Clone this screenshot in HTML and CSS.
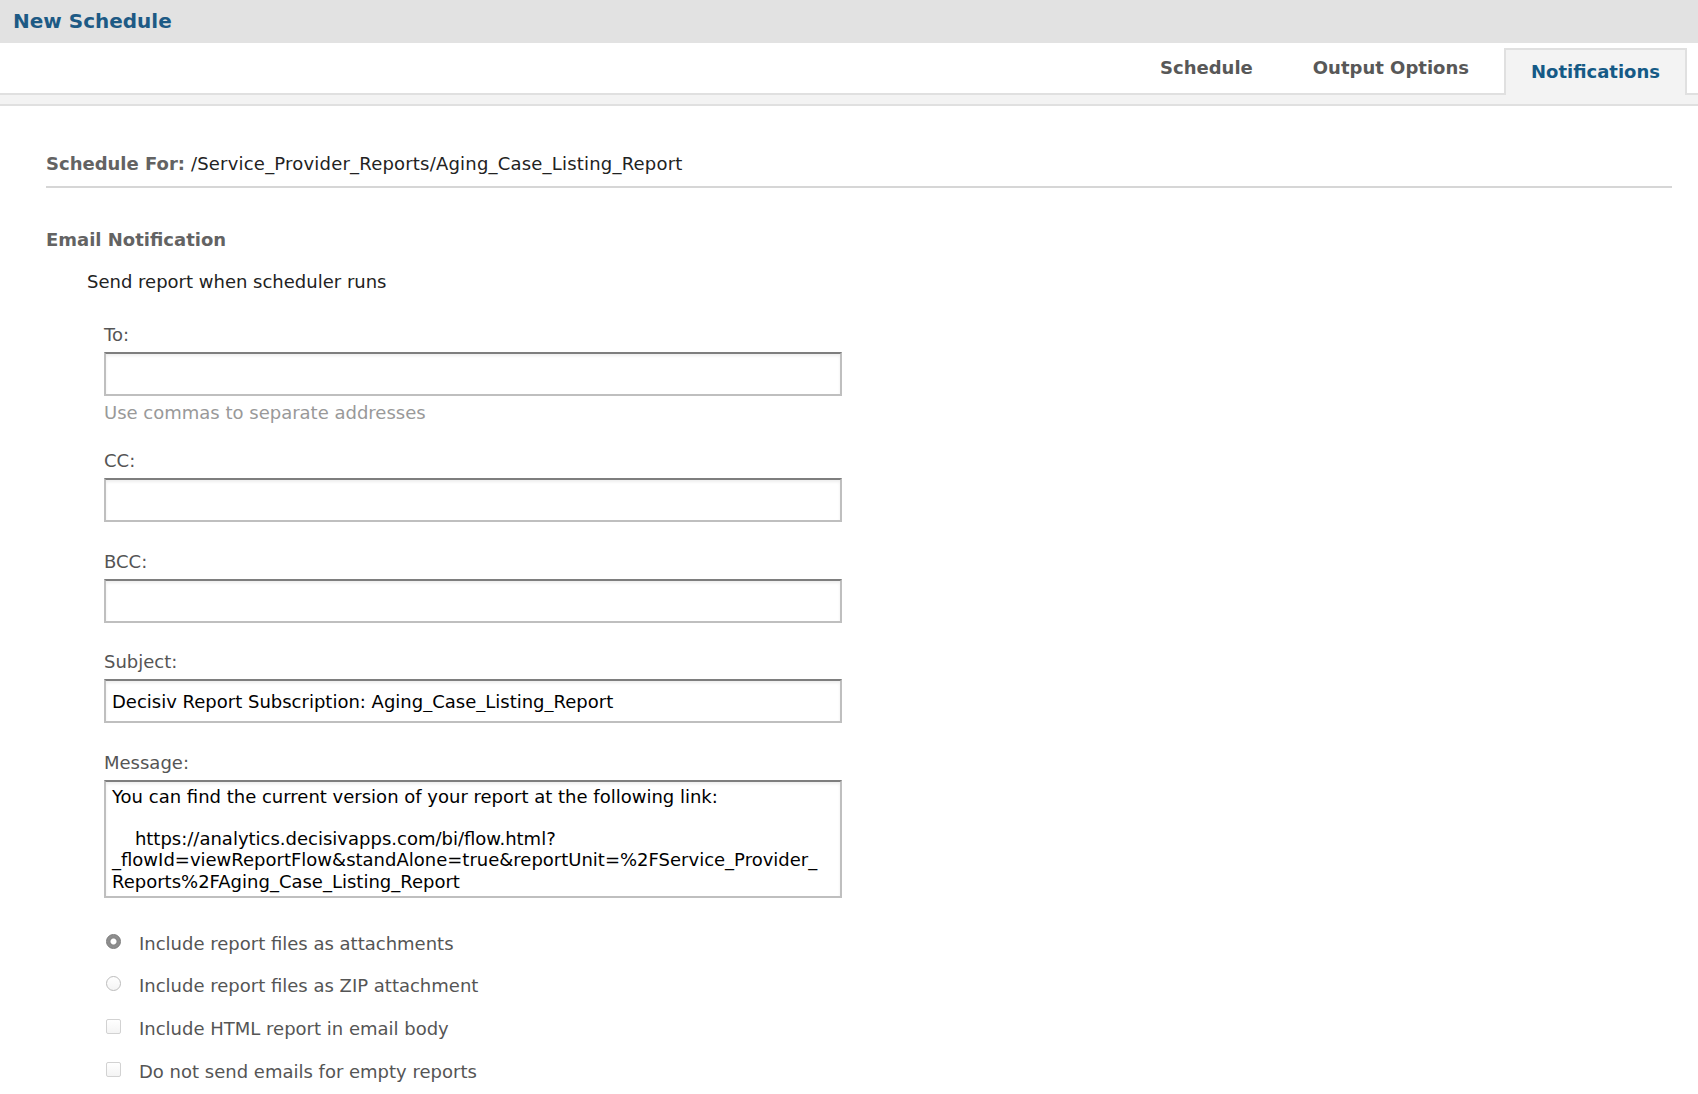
FILE: index.html
```html
<!DOCTYPE html>
<html lang="en">
<head>
  <meta charset="UTF-8" />
  <meta name="viewport" content="width=device-width, initial-scale=1.0" />
  <title>New Schedule</title>
  <link rel="stylesheet" href="styles.css">
</head>
<body>
  <div class="header">New Schedule</div>

  <div class="tabs">
    <div class="tab">Schedule</div>
    <div class="tab">Output Options</div>
    <div class="tab active">Notifications</div>
  </div>
  <div class="tab-band"></div>

  <div class="content">
    <div class="schedule-for">
      <b>Schedule For:</b> /Service_Provider_Reports/Aging_Case_Listing_Report
    </div>

    <div class="section-title">Email Notification</div>
    <div class="section">
      <div class="intro">Send report when scheduler runs</div>

      <div class="fields">
        <div class="field">
          <label for="to">To:</label>
          <input type="text" id="to" />
          <div class="hint">Use commas to separate addresses</div>
        </div>
        <div class="field">
          <label for="cc">CC:</label>
          <input type="text" id="cc" />
        </div>
        <div class="field">
          <label for="bcc">BCC:</label>
          <input type="text" id="bcc" />
        </div>
        <div class="field">
          <label for="subject">Subject:</label>
          <input type="text" id="subject" value="Decisiv Report Subscription: Aging_Case_Listing_Report" />
        </div>
        <div class="field">
          <label for="message">Message:</label>
          <textarea id="message" wrap="off">You can find the current version of your report at the following link:

    https://analytics.decisivapps.com/bi/flow.html?
_flowId=viewReportFlow&amp;standAlone=true&amp;reportUnit=%2FService_Provider_
Reports%2FAging_Case_Listing_Report</textarea>
        </div>

        <div class="options">
          <label class="option"><input type="radio" name="attach" checked /> Include report files as attachments</label>
          <label class="option"><input type="radio" name="attach" /> Include report files as ZIP attachment</label>
          <label class="option"><input type="checkbox" /> Include HTML report in email body</label>
          <label class="option"><input type="checkbox" /> Do not send emails for empty reports</label>
        </div>
      </div>
    </div>
  </div>
</body>
</html>
```

FILE: styles.css
```css
body {
  margin: 0;
  background: #fff;
  color: #222;
  font-family: "DejaVu Sans", Verdana, sans-serif;
  font-size: 18px;
  line-height: 22px;
}

.header {
  height: 43px;
  box-sizing: border-box;
  padding: 9px 13px 0;
  background-color: #e2e2e2;
  color: #1d5a85;
  font-size: 20px;
  font-weight: bold;
  line-height: 24px;
}

/* tab strip */
.tabs {
  display: flex;
  justify-content: flex-end;
  align-items: flex-start;
  height: 50px;
  padding-right: 11px;
  border-bottom: 2px solid #e0e0e0;
}
.tab {
  padding: 14px 30px 0;
  color: #585858;
  font-weight: bold;
}
.tab.active {
  margin-top: 5px;
  margin-left: 5px;
  height: 47px;
  box-sizing: border-box;
  padding: 11px 25px 0;
  background-color: #f3f3f3;
  border: 2px solid #e0e0e0;
  border-bottom: none;
  color: #155a86;
}
.tab-band {
  height: 9px;
  background-color: #f3f3f3;
  border-bottom: 2px solid #e0e0e0;
}

.content {
  padding: 47px 26px 40px 46px;
}
.schedule-for {
  padding-bottom: 11px;
  border-bottom: 2px solid #d6d6d6;
  color: #222;
  letter-spacing: 0.2px;
}
.schedule-for b {
  color: #636363;
  letter-spacing: 0;
}
.section-title {
  margin-top: 41px;
  color: #636363;
  font-weight: bold;
}
.section {
  padding-left: 41px;
}
.intro {
  margin-top: 20px;
}

.fields {
  padding-left: 17px;
  padding-top: 9px;
}
.field {
  margin-top: 28.5px;
}
.field:first-child {
  margin-top: 22px;
}
.field:nth-child(2) {
  margin-top: 26px;
}
.field label {
  display: block;
  margin-bottom: 6px;
  color: #555;
}
.field input,
.field textarea {
  display: block;
  width: 738px;
  box-sizing: border-box;
  margin: 0;
  border: 2px solid #bfbfbf;
  border-top-color: #7e7e7e;
  border-radius: 0;
  box-shadow: inset 0 2px 3px rgba(0, 0, 0, 0.07);
  background: #fff;
  color: #000;
  font-family: "DejaVu Sans", Verdana, sans-serif;
  font-size: 18px;
  outline: none;
}
.field input {
  height: 44px;
  padding: 0 6px;
}
.field textarea {
  height: 118px;
  padding: 4px 6px;
  line-height: 21.3px;
  resize: none;
  overflow: hidden;
}
.hint {
  margin-top: 6px;
  color: #999;
}

/* radios and checkboxes */
.options {
  display: flex;
  flex-direction: column;
  gap: 20.7px;
  margin-top: 35px;
}
.option {
  display: flex;
  align-items: center;
  color: #555;
}
.option input {
  appearance: none;
  -webkit-appearance: none;
  flex: none;
  width: 15px;
  height: 15px;
  margin: -5px 18px 0 2px;
  border: 1px solid #c9c9c9;
  background: linear-gradient(#fff, #f4f4f4);
}
.option input[type="radio"] {
  border-radius: 50%;
  border-color: #bcbcbc;
}
.option input[type="radio"]:checked {
  border-color: #777;
  background: radial-gradient(circle, #fff 0, #fff 2.5px, #888 3.5px, #999 100%);
}
.option input[type="checkbox"] {
  border-radius: 2px;
  border-color: #d2d2d2;
}
```
